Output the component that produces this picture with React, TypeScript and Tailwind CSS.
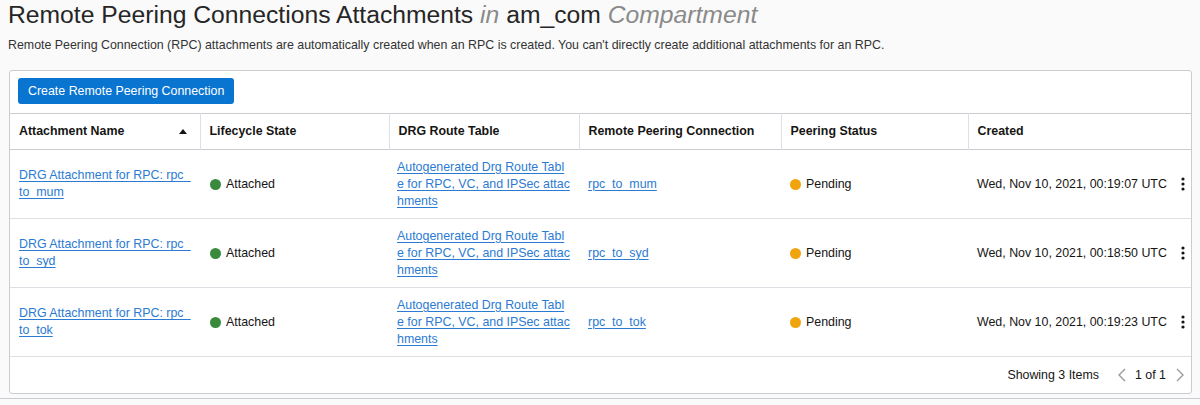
import React from "react";

const rows = [
  { name: "DRG Attachment for RPC: rpc_to_mum", rpc: "rpc_to_mum", created: "Wed, Nov 10, 2021, 00:19:07 UTC" },
  { name: "DRG Attachment for RPC: rpc_to_syd", rpc: "rpc_to_syd", created: "Wed, Nov 10, 2021, 00:18:50 UTC" },
  { name: "DRG Attachment for RPC: rpc_to_tok", rpc: "rpc_to_tok", created: "Wed, Nov 10, 2021, 00:19:23 UTC" },
];

const headers = [
  "Attachment Name",
  "Lifecycle State",
  "DRG Route Table",
  "Remote Peering Connection",
  "Peering Status",
  "Created",
];

function Link({ children }: { children: React.ReactNode }) {
  return <a className="text-[#2b7bd3] underline underline-offset-[2px] break-all cursor-pointer">{children}</a>;
}

function Kebab() {
  return (
    <svg width="4" height="14" viewBox="0 0 4 14" className="fill-[#161513]">
      <circle cx="2" cy="2" r="1.6" />
      <circle cx="2" cy="7" r="1.6" />
      <circle cx="2" cy="12" r="1.6" />
    </svg>
  );
}

export default function App() {
  return (
    <div className="min-h-[405px] bg-[#fafafa] text-[#333] font-['Liberation_Sans',Arial,sans-serif]">
      <div className="px-[8px] pt-[1px]">
        <h1 className="text-[24.7px] leading-[28px] text-[#262626]">
          Remote Peering Connections Attachments <i className="text-[#8a8a8a]">in</i> am_com{" "}
          <i className="text-[#8a8a8a]">Compartment</i>
        </h1>
        <p className="mt-[9px] text-[12.4px] leading-[15px] text-[#333]">
          Remote Peering Connection (RPC) attachments are automatically created when an RPC is created. You can't
          directly create additional attachments for an RPC.
        </p>
      </div>

      <div className="mx-[9px] mt-[17px] w-[1183px] rounded-[3px] border border-[#c9cdd2] bg-white">
        <div className="px-[8px] pt-[7px] pb-[9px]">
          <button className="h-[26px] rounded-[3px] bg-[#0a74d1] px-[10px] text-[12.4px] text-white">
            Create Remote Peering Connection
          </button>
        </div>
        <table className="w-full table-fixed border-collapse text-[12.4px] leading-[17px]">
          <colgroup>
            <col className="w-[190px]" />
            <col className="w-[189px]" />
            <col className="w-[190px]" />
            <col className="w-[202px]" />
            <col className="w-[187px]" />
            <col />
          </colgroup>
          <thead>
            <tr className="h-[36px] border-y border-[#c9cdd2]">
              {headers.map((h, i) => (
                <th
                  key={h}
                  className={`px-[9px] text-left font-bold text-[#161513] ${i < 5 ? "border-r border-[#dcdfe3]" : ""}`}
                >
                  {i === 0 ? (
                    <div className="flex items-center justify-between">
                      <span>{h}</span>
                      <svg width="8" height="5" viewBox="0 0 8 5" className="mr-[4px] fill-[#161513]">
                        <path d="M4 0 L8 5 L0 5 Z" />
                      </svg>
                    </div>
                  ) : (
                    h
                  )}
                </th>
              ))}
            </tr>
          </thead>
          <tbody>
            {rows.map((r) => (
              <tr key={r.rpc} className="h-[69px] border-b border-[#dcdfe3] align-middle">
                <td className="px-[9px]">
                  <Link>{r.name}</Link>
                </td>
                <td className="px-[10px]">
                  <div className="flex items-center gap-[5px] text-[#161513]">
                    <span className="h-[11px] w-[11px] rounded-full bg-[#3a8a3d]" />
                    Attached
                  </div>
                </td>
                <td className="pl-[8px]">
                  <div className="w-[173.5px]">
                    <Link>Autogenerated Drg Route Table for RPC, VC, and IPSec attachments</Link>
                  </div>
                </td>
                <td className="px-[9px]">
                  <Link>{r.rpc}</Link>
                </td>
                <td className="px-[9px]">
                  <div className="flex items-center gap-[5px] text-[#161513]">
                    <span className="h-[11px] w-[11px] rounded-full bg-[#f0a40e]" />
                    Pending
                  </div>
                </td>
                <td className="pl-[9px] pr-[6px]">
                  <div className="flex items-center justify-between text-[#161513]">
                    <span>{r.created}</span>
                    <Kebab />
                  </div>
                </td>
              </tr>
            ))}
          </tbody>
        </table>
        <div className="flex h-[36px] items-center justify-end pr-[7px] text-[12.4px] text-[#161513]">
          <span>Showing 3 Items</span>
          <svg width="8" height="14" viewBox="0 0 8 14" className="ml-[19px] mr-[9px]">
            <path d="M7 1 L1 7 L7 13" fill="none" stroke="#9a9a9a" strokeWidth="1.4" />
          </svg>
          <span>1 of 1</span>
          <svg width="8" height="14" viewBox="0 0 8 14" className="ml-[10px]">
            <path d="M1 1 L7 7 L1 13" fill="none" stroke="#9a9a9a" strokeWidth="1.4" />
          </svg>
        </div>
      </div>
      <div className="mt-[4px] border-t border-[#c9cdd2]" />
    </div>
  );
}
